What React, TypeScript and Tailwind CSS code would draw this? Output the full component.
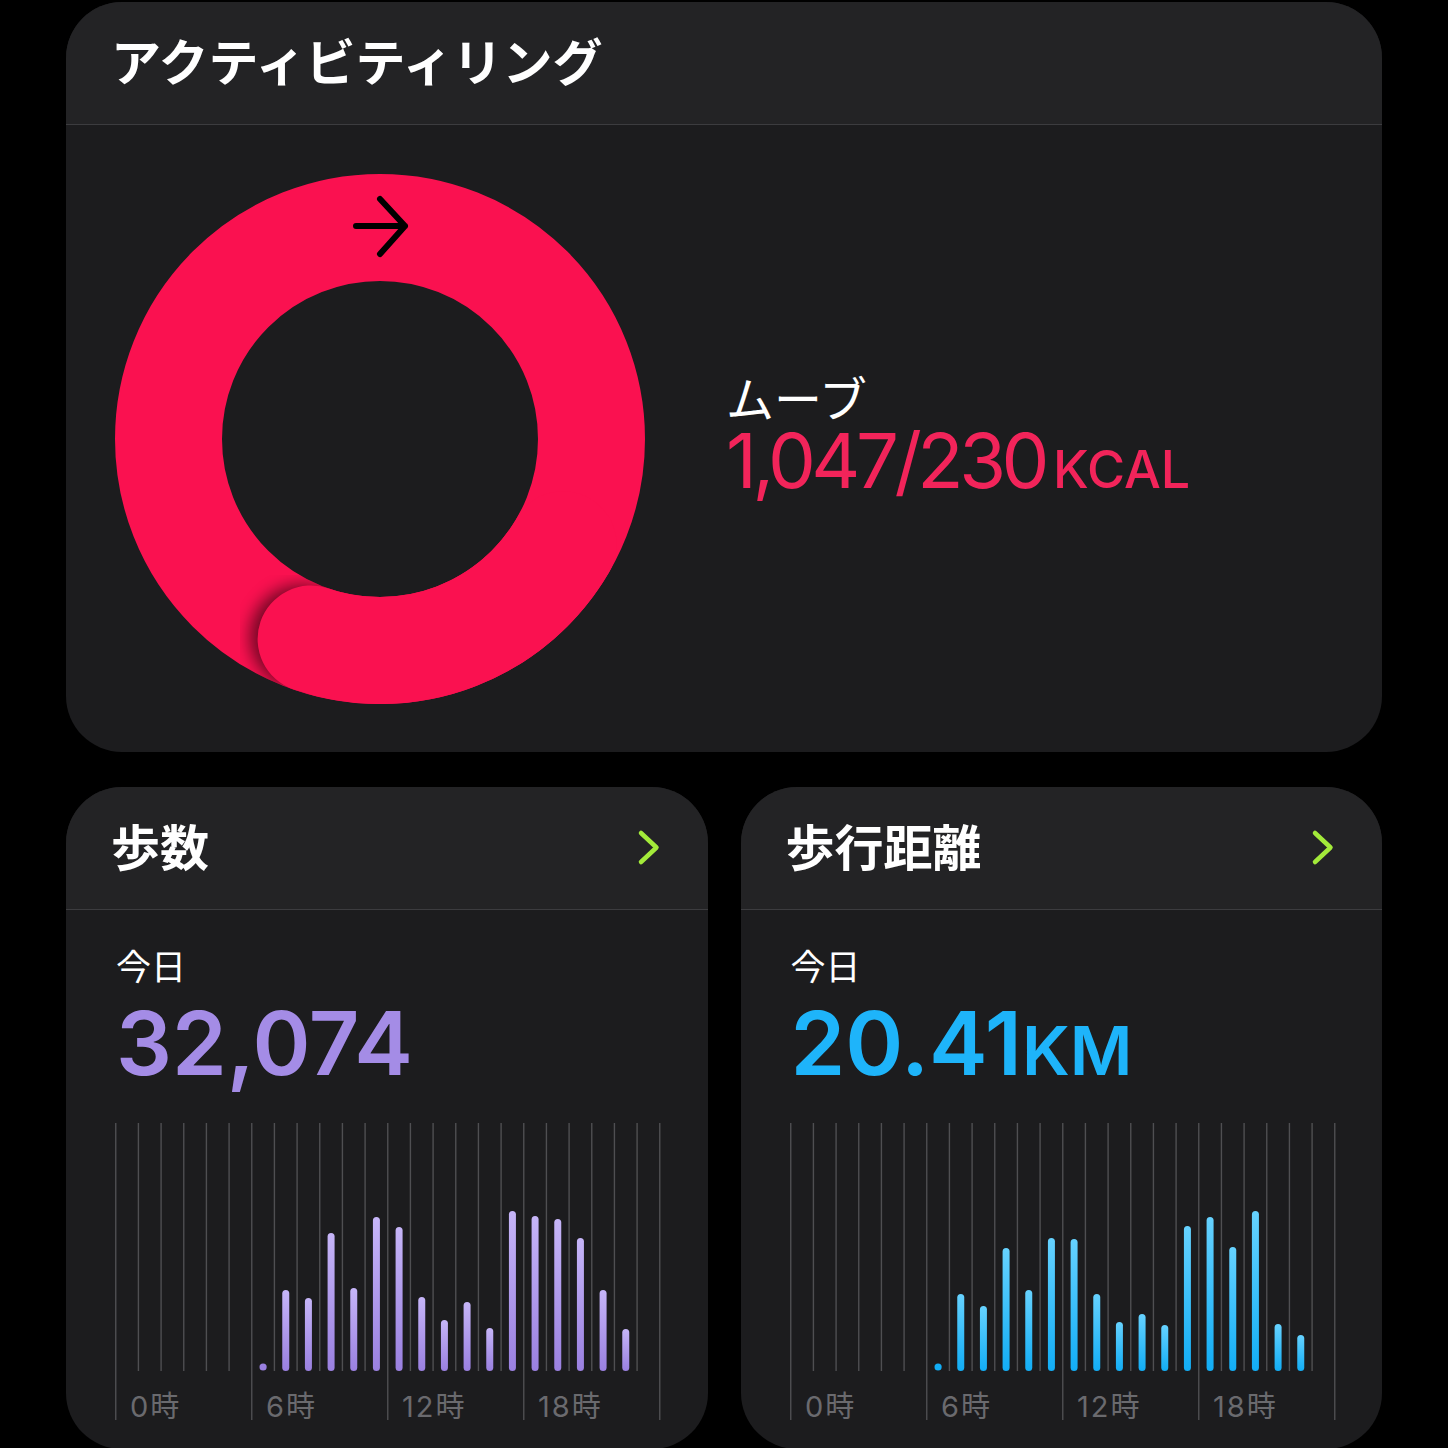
import { FC } from "react";

const JP = "font-['Noto_Sans_CJK_JP',sans-serif]";
const NUM = "font-['Inter','Noto_Sans_CJK_JP',sans-serif]";

const SLOT = 22.667;

const stepBars = [81, 73, 138, 83, 154, 144, 74, 51, 69, 43, 160, 155, 152, 133, 81, 42];
const distBars = [77, 65, 123, 81, 133, 132, 77, 49, 57, 46, 145, 154, 124, 160, 47, 36];

interface ChartProps {
  id: string;
  bars: number[];
  top: string;
  bottom: string;
}

const HourChart: FC<ChartProps> = ({ id, bars, top, bottom }) => {
  const lines = Array.from({ length: 25 }, (_, i) => i);
  return (
    <svg width="546" height="300" viewBox="0 0 546 300" className="block">
      <defs>
        <linearGradient id={id} x1="0" y1="0" x2="0" y2="1">
          <stop offset="0" stopColor={top} />
          <stop offset="1" stopColor={bottom} />
        </linearGradient>
      </defs>
      {lines.map((i) => {
        const x = i * SLOT + 0.75;
        const major = i % 6 === 0;
        return (
          <line
            key={i}
            x1={x}
            x2={x}
            y1={0}
            y2={major ? 297 : 248}
            stroke="#4f4f52"
            strokeWidth={1.4}
          />
        );
      })}
      <circle cx={6.5 * SLOT + 0.75} cy={244} r={3.6} fill={bottom} />
      {bars.map((h, k) => {
        const cx = (k + 7.5) * SLOT + 0.75;
        return (
          <rect
            key={k}
            x={cx - 3.5}
            y={248 - h}
            width={7}
            height={h}
            rx={3.5}
            fill={`url(#${id})`}
          />
        );
      })}
      {[0, 6, 12, 18].map((h) => (
        <text
          key={h}
          x={h * SLOT + 15}
          y={294}
          fill="#6a6a6e"
          fontSize="29"
          fontFamily="Inter, 'Noto Sans CJK JP', sans-serif"
          letterSpacing="2"
        >
          {h}時
        </text>
      ))}
    </svg>
  );
};

const Chevron: FC = () => (
  <svg width="24" height="38" viewBox="0 0 24 38">
    <path
      d="M4 4 L19.5 18.5 L4 33"
      fill="none"
      stroke="#a3ea3a"
      strokeWidth="4.5"
      strokeLinecap="round"
      strokeLinejoin="round"
    />
  </svg>
);

const Ring: FC = () => (
  <svg width="530" height="530" viewBox="0 0 530 530" className="block shrink-0">
    <defs>
      <mask id="ringMask">
        <circle cx="265" cy="265" r="265" fill="white" />
        <circle cx="265" cy="265" r="158" fill="black" />
      </mask>
      <filter id="tipBlur" x="-60%" y="-60%" width="220%" height="220%">
        <feGaussianBlur stdDeviation="8" />
      </filter>
    </defs>
    <circle cx="265" cy="265" r="211.5" fill="none" stroke="#fa1150" strokeWidth="107" />
    <g mask="url(#ringMask)">
      <circle cx="187" cy="463" r="52" fill="#000" opacity="0.55" filter="url(#tipBlur)" />
    </g>
    <path
      d="M 448.2 370.75 A 211.5 211.5 0 0 1 196.1 465"
      fill="none"
      stroke="#fa1150"
      strokeWidth="107"
      strokeLinecap="round"
    />
    <path
      d="M241 52 H290 M265 25 L290 52 L265 80"
      fill="none"
      stroke="#000"
      strokeWidth="6"
      strokeLinecap="round"
      strokeLinejoin="round"
    />
  </svg>
);

interface StatCardProps {
  title: string;
  chartId: string;
  bars: number[];
  top: string;
  bottom: string;
  children: React.ReactNode;
}

const StatCard: FC<StatCardProps> = ({ title, chartId, bars, top, bottom, children }) => (
  <div className="h-[662px] rounded-[56px] overflow-hidden bg-[#1c1c1e] flex flex-col">
    <div className="h-[122px] shrink-0 bg-[#232325] flex items-center justify-between pl-[45px] pr-[47px]">
      <h2 className={`${JP} text-[49px] leading-none font-bold text-white mb-[8px]`}>{title}</h2>
      <Chevron />
    </div>
    <div className="h-px bg-[#3c3c3f]" />
    <div className="px-[49px] pt-[37px]">
      <div className={`${JP} text-[35px] leading-none text-white pl-[1px]`}>今日</div>
      <div className="mt-[17px] pl-[1px]">{children}</div>
      <div className="mt-[36px]">
        <HourChart id={chartId} bars={bars} top={top} bottom={bottom} />
      </div>
    </div>
  </div>
);

export default function App() {
  return (
    <div className="h-[1448px] overflow-hidden bg-black px-[66px] pt-[2px]">
      <div className="rounded-[56px] overflow-hidden bg-[#1c1c1e]">
        <div className="h-[122px] bg-[#232325] flex items-center px-[45px]">
          <h1 className={`${JP} text-[50px] leading-none font-bold text-white mb-[8px]`}>
            アクティビティリング
          </h1>
        </div>
        <div className="h-px bg-[#3c3c3f]" />
        <div className="flex items-center pl-[49px] pt-[49px] pb-[48px]">
          <Ring />
          <div className="ml-[81px] mb-[8px]">
            <div className={`${JP} text-[48px] leading-none text-white`}>ムーブ</div>
            <div className={`${NUM} mt-[2px] flex items-baseline leading-none text-[#f2245a]`}>
              <span className="text-[76px] font-normal tracking-[-4.5px]">1,047/230</span>
              <span className="ml-[8px] text-[52px] font-medium">KCAL</span>
            </div>
          </div>
        </div>
      </div>

      <div className="mt-[35px] grid grid-cols-2 gap-[33px]">
        <StatCard title="歩数" chartId="stepGrad" bars={stepBars} top="#c6b5f8" bottom="#9a80e0">
          <span className={`${NUM} text-[88px] leading-none font-semibold text-[#a48ce6]`}>
            32,074
          </span>
        </StatCard>
        <StatCard title="歩行距離" chartId="distGrad" bars={distBars} top="#66d2ff" bottom="#12adf5">
          <span className={`${NUM} leading-none font-semibold text-[#1eb4fa] flex items-baseline`}>
            <span className="text-[88px]">20.41</span>
            <span className="text-[68px]">KM</span>
          </span>
        </StatCard>
      </div>
    </div>
  );
}
